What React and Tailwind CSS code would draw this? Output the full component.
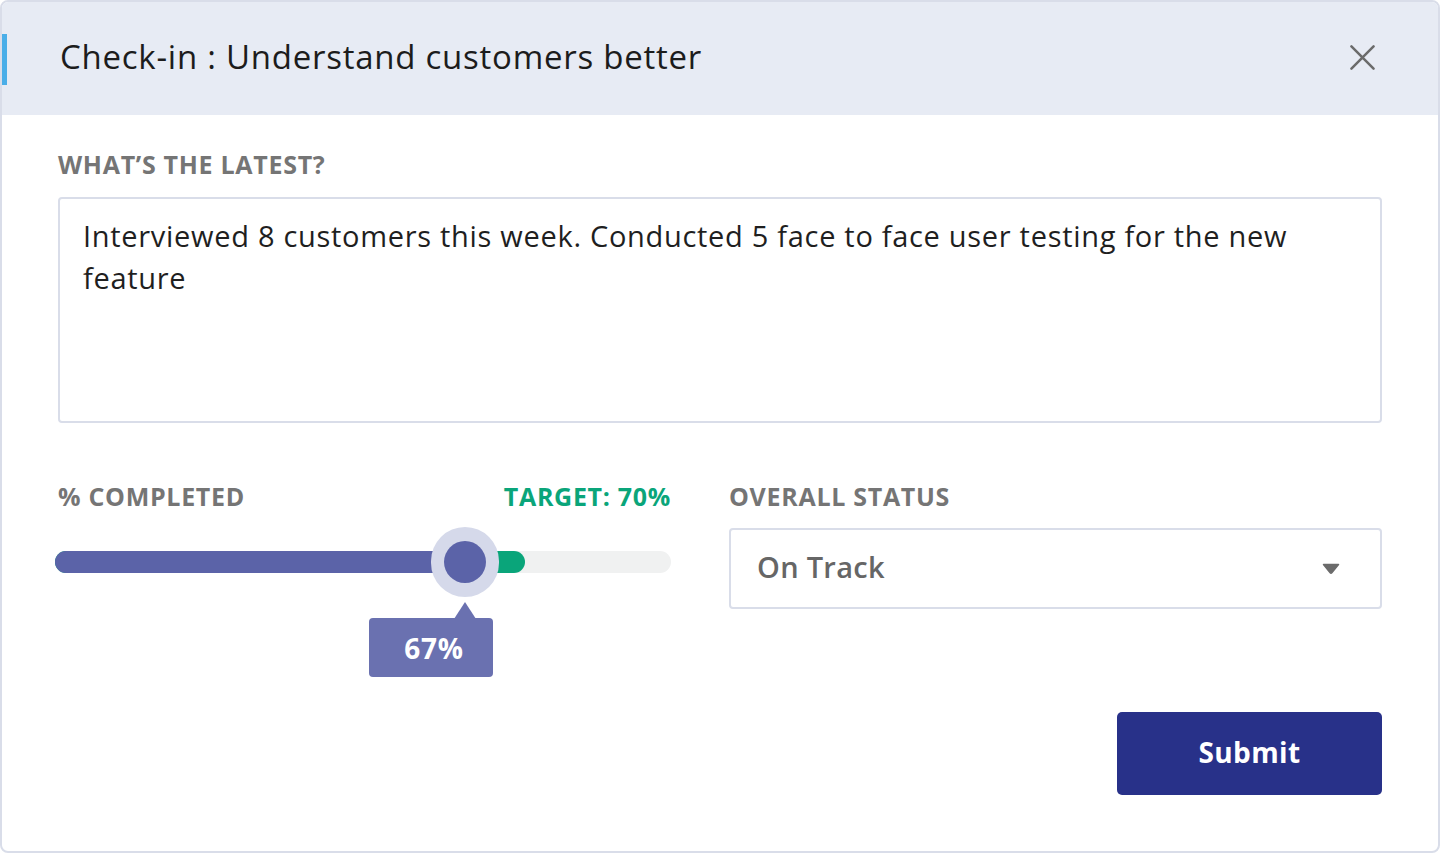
import React from "react";

const font = { fontFamily: "'Open Sans', Lato, sans-serif" };

const CheckIn = () => {
  const pct = 67;
  return (
    <div className="w-full h-[853px] bg-white" style={font}>
      <div className="h-full border-2 border-[#d9dde9] rounded-[8px] overflow-hidden flex flex-col">
        {/* header */}
        <div className="h-[113px] shrink-0 bg-[#e7ebf4] flex items-center">
          <div className="w-[6px] h-[51px] bg-[#4aaee8] -ml-[1px] mt-[1px]"></div>
          <h1 className="ml-[53px] -mt-[5px] text-[33px] leading-none tracking-[0.75px] text-[#1c1c1c]">
            Check-in : Understand customers better
          </h1>
          <button className="ml-auto mr-[63px] -mt-[2px] text-[#6b6b6b]">
            <svg width="25" height="25" viewBox="0 0 26 26" fill="none">
              <path d="M1.5 1.5 L24.5 24.5 M24.5 1.5 L1.5 24.5" stroke="currentColor" strokeWidth="2.6" strokeLinecap="round" />
            </svg>
          </button>
        </div>

        {/* body */}
        <div className="px-[56px] pt-[37px] flex flex-col">
          <label className="text-[25px] leading-[25px] font-bold tracking-[0.7px] text-[#757575]">
            WHAT’S THE LATEST?
          </label>
          <textarea
            className="mt-[20px] h-[226px] w-full resize-none border-2 border-[#d9dde9] rounded-[4px] px-[23px] pt-[16px] text-[29px] leading-[42px] tracking-[0.7px] text-[#1f1f1f] outline-none"
            style={font}
            defaultValue="Interviewed 8 customers this week. Conducted 5 face to face user testing for the new feature"
          />

          <div className="mt-[61px] grid grid-cols-[612px_1fr] gap-[59px]">
            {/* completion slider */}
            <div>
              <div className="flex justify-between items-center h-[26px] text-[25px] font-bold tracking-[0.7px]">
                <span className="text-[#757575]">% COMPLETED</span>
                <span className="text-[#0aa57a] -mr-[1px]">TARGET: 70%</span>
              </div>
              <div className="relative mt-[41px] -ml-[3px] w-[616px] h-[22px] rounded-full bg-[#f0f1f1]">
                <div className="absolute left-0 top-0 h-full w-[470px] rounded-full bg-[#0aa57a]"></div>
                <div className="absolute left-0 top-0 h-full rounded-full bg-[#5b63a8]" style={{ width: `${pct}%` }}></div>
                <div className="absolute left-[376px] top-[-24px] w-[68px] h-[70px] rounded-full bg-[#d5d9ea] flex items-center justify-center">
                  <div className="w-[42px] h-[42px] rounded-full bg-[#5b63a8]"></div>
                </div>
                <div className="absolute left-[314px] top-[67px] w-[124px] h-[59px] rounded-[4px] bg-[#6a71b0] flex items-center justify-center text-white text-[28px] font-bold tracking-[0.8px]">
                  <span className="ml-[6px]">{pct}%</span>
                  <div className="absolute top-[-16px] left-[85px] w-0 h-0 border-l-[11px] border-r-[11px] border-b-[17px] border-l-transparent border-r-transparent border-b-[#6a71b0]"></div>
                </div>
              </div>
            </div>

            {/* overall status */}
            <div>
              <div className="h-[26px] flex items-center text-[25px] font-bold tracking-[0.7px] text-[#757575]">
                OVERALL STATUS
              </div>
              <div className="mt-[18px] h-[81px] border-2 border-[#d9dde9] rounded-[4px] flex items-center pl-[26px] pr-[40px]">
                <span className="-mt-[4px] text-[29px] font-semibold tracking-[0.3px] text-[#666]">On Track</span>
                <svg className="ml-auto" width="18" height="12" viewBox="0 0 18 12">
                  <path d="M1.5 1.5 H16.5 L9.8 9.8 Q9 10.7 8.2 9.8 Z" fill="#6b6b6b" stroke="#6b6b6b" strokeWidth="1.5" strokeLinejoin="round" />
                </svg>
              </div>
            </div>
          </div>

          <div className="mt-[103px] flex justify-end">
            <button className="w-[265px] h-[83px] rounded-[5px] bg-[#283189] text-white text-[28px] font-bold tracking-[0.4px]">
              <span className="block -mt-[3px]">Submit</span>
            </button>
          </div>
        </div>
      </div>
    </div>
  );
};

export default function App() {
  return <CheckIn />;
}
